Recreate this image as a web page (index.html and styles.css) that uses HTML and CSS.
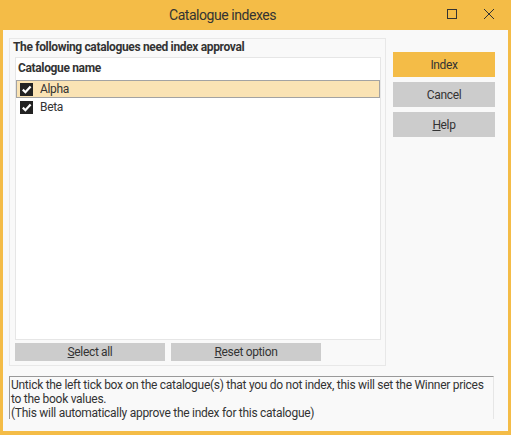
FILE: index.html
```html
<!DOCTYPE html>
<html>
<head>
<meta charset="utf-8">
<link rel="stylesheet" href="styles.css">
</head>
<body>
<div class="window">
  <div class="titlebar">
    <div class="title">Catalogue indexes</div>
    <div class="tb-icons">
      <svg class="tb-icon" width="12" height="12" viewBox="0 0 12 12"><rect x="1.5" y="1.5" width="9" height="9" fill="none" stroke="#333" stroke-width="1"/></svg>
      <svg class="tb-icon" width="12" height="12" viewBox="0 0 12 12"><path d="M1 1 L11 11 M11 1 L1 11" stroke="#333" stroke-width="1" fill="none"/></svg>
    </div>
  </div>
  <div class="content">
    <div class="top">
      <div class="group">
        <div class="group-label">The following catalogues need index approval</div>
        <div class="list">
          <div class="list-header">Catalogue name</div>
          <div class="row selected"><span class="cb"><svg width="13" height="13" viewBox="0 0 13 13"><path d="M2.8 6.6 L5.4 9.2 L10.6 3.4" stroke="#fff" stroke-width="2.2" fill="none"/></svg></span>Alpha</div>
          <div class="row"><span class="cb"><svg width="13" height="13" viewBox="0 0 13 13"><path d="M2.8 6.6 L5.4 9.2 L10.6 3.4" stroke="#fff" stroke-width="2.2" fill="none"/></svg></span>Beta</div>
        </div>
        <div class="group-buttons">
          <div class="btn small"><u>S</u>elect all</div>
          <div class="btn small"><u>R</u>eset option</div>
        </div>
      </div>
      <div class="side">
        <div class="btn big primary">Index</div>
        <div class="btn big">Cancel</div>
        <div class="btn big"><u>H</u>elp</div>
      </div>
    </div>
    <div class="info">Untick the left tick box on the catalogue(s) that you do not index, this will set the Winner prices to the book values.<br>(This will automatically approve the index for this catalogue)</div>
  </div>
</div>
</body>
</html>
```

FILE: styles.css
```css
* { box-sizing: border-box; }
body {
  margin: 0;
  font-family: Roboto, "Noto Sans", sans-serif;
  color: #333;
  font-size: 12px;
  letter-spacing: -0.35px;
}
.window {
  width: 511px;
  height: 435px;
  background: #f4bc47;
  padding: 0 3px 4px 3px;
  display: flex;
  flex-direction: column;
}
.titlebar {
  height: 30px;
  flex: none;
  position: relative;
  display: flex;
  align-items: center;
  justify-content: center;
}
.title {
  font-size: 14px;
  color: #333;
  letter-spacing: -0.45px;
  transform: translateX(-33px);
}
.tb-icons {
  position: absolute;
  right: 13px;
  top: 8px;
  display: flex;
  gap: 25px;
}
.tb-icon { display: block; }
.content {
  flex: 1;
  background: #f9f9f9;
  padding: 8px 0 0 6px;
  display: flex;
  flex-direction: column;
}
.top {
  display: flex;
  gap: 7px;
}
.group {
  width: 377px;
  height: 328px;
  border: 1px solid #e8e8e8;
  display: flex;
  flex-direction: column;
  padding: 0 4px 0 5px;
}
.group-label {
  height: 18px;
  line-height: 16px;
  font-weight: bold;
  margin-left: -2px;
}
.list {
  flex: none;
  height: 283px;
  background: #fff;
  border: 1px solid #e6e6e6;
  display: flex;
  flex-direction: column;
}
.list-header {
  height: 22px;
  line-height: 20px;
  font-weight: bold;
  padding-left: 2px;
}
.row {
  height: 18px;
  display: flex;
  align-items: center;
  padding-left: 3px;
  gap: 7px;
  border: 1px solid transparent;
}
.row.selected {
  background: #fae3b4;
  border-color: #a3a3a3;
}
.cb {
  width: 13px;
  height: 13px;
  background: #222;
  display: block;
}
.cb svg { display: block; }
.group-buttons {
  display: flex;
  gap: 6px;
  margin-top: 3px;
}
.btn {
  background: #cccccc;
  color: #333;
  display: flex;
  align-items: center;
  justify-content: center;
}
.btn.small {
  width: 150px;
  height: 18px;
}
.side {
  display: flex;
  flex-direction: column;
  gap: 5px;
  padding-top: 14px;
}
.btn.big {
  width: 102px;
  height: 25px;
}
.btn.primary { background: #f4bc47; }
.info {
  margin-top: 10px;
  width: 485px;
  height: 43px;
  border-top: 1px solid #999;
  border-left: 1px solid #999;
  border-right: 1px solid #e6e6e6;
  padding: 1px 0 0 1px;
  line-height: 14px;
  letter-spacing: -0.28px;
}
```
